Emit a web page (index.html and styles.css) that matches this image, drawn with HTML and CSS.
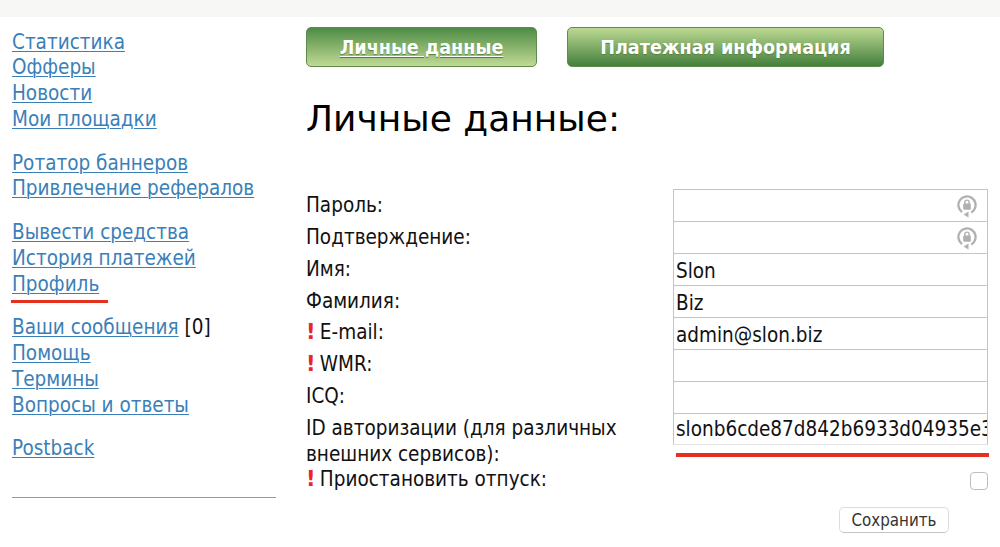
FILE: index.html
```html
<!DOCTYPE html>
<html lang="ru">
<head>
<meta charset="utf-8">
<title>Личные данные</title>
<link rel="stylesheet" href="styles.css">
</head>
<body>
<div class="topstrip"></div>
<div class="page">
  <nav class="sidebar">
    <ul class="menu">
      <li><a href="#">Статистика</a></li>
      <li><a href="#">Офферы</a></li>
      <li><a href="#">Новости</a></li>
      <li><a href="#">Мои площадки</a></li>
    </ul>
    <ul class="menu">
      <li><a href="#">Ротатор баннеров</a></li>
      <li><a href="#">Привлечение рефералов</a></li>
    </ul>
    <ul class="menu">
      <li><a href="#">Вывести средства</a></li>
      <li><a href="#">История платежей</a></li>
      <li class="marked"><a href="#">Профиль</a></li>
    </ul>
    <ul class="menu">
      <li><a href="#">Ваши сообщения</a> [0]</li>
      <li><a href="#">Помощь</a></li>
      <li><a href="#">Термины</a></li>
      <li><a href="#">Вопросы и ответы</a></li>
    </ul>
    <ul class="menu">
      <li><a href="#">Postback</a></li>
    </ul>
    <hr class="rule">
  </nav>
  <main class="content">
    <div class="tabs">
      <a href="#" class="tab tab-active">Личные данные</a>
      <a href="#" class="tab tab-other">Платежная информация</a>
    </div>
    <h1 class="title">Личные данные:</h1>
    <form class="form">
      <label class="lbl">Пароль:</label>
      <div class="field"><span class="val"></span>
        <svg class="key" viewBox="0 0 20 23"><circle cx="10" cy="10" r="8.6" fill="none" stroke="#b0b0b0" stroke-width="2.3" stroke-dasharray="44 10" transform="rotate(125 10 10)"/><path d="M11.5 16.4L6.5 19.6l5 3z" fill="#b0b0b0"/><rect x="6.2" y="8.4" width="7.6" height="6.4" rx="1" fill="#b0b0b0"/><path d="M7.9 9V7.2a2.1 2.1 0 0 1 4.2 0V9" fill="none" stroke="#b0b0b0" stroke-width="1.4"/></svg>
      </div>
      <label class="lbl">Подтверждение:</label>
      <div class="field"><span class="val"></span>
        <svg class="key" viewBox="0 0 20 23"><circle cx="10" cy="10" r="8.6" fill="none" stroke="#b0b0b0" stroke-width="2.3" stroke-dasharray="44 10" transform="rotate(125 10 10)"/><path d="M11.5 16.4L6.5 19.6l5 3z" fill="#b0b0b0"/><rect x="6.2" y="8.4" width="7.6" height="6.4" rx="1" fill="#b0b0b0"/><path d="M7.9 9V7.2a2.1 2.1 0 0 1 4.2 0V9" fill="none" stroke="#b0b0b0" stroke-width="1.4"/></svg>
      </div>
      <label class="lbl">Имя:</label>
      <div class="field"><span class="val">Slon</span></div>
      <label class="lbl">Фамилия:</label>
      <div class="field"><span class="val">Biz</span></div>
      <label class="lbl lbl-low"><b class="req">!</b> E-mail:</label>
      <div class="field"><span class="val">admin@slon.biz</span></div>
      <label class="lbl lbl-low"><b class="req">!</b> WMR:</label>
      <div class="field"><span class="val"></span></div>
      <label class="lbl lbl-low">ICQ:</label>
      <div class="field"><span class="val"></span></div>
      <label class="lbl lbl-wide">ID авторизации (для различных внешних сервисов):</label>
      <div class="field field-last"><span class="val">slonb6cde87d842b6933d04935e3</span><i class="mark-id"></i></div>
      <label class="lbl lbl-check"><b class="req">!</b> Приостановить отпуск:</label>
      <div class="checkcell"><span class="check"></span></div>
      <div class="actions"><button type="button" class="save">Сохранить</button></div>
    </form>
  </main>
</div>
</body>
</html>
```
FILE: styles.css
```css
* { box-sizing: border-box; }
html, body { margin: 0; height: 547px; overflow: hidden; background: #fff; }
body { font-family: "DejaVu Sans", Verdana, sans-serif; font-stretch: condensed; color: #111; font-size: 20.5px; }
.topstrip { height: 17px; background: #f7f7f6; }
.page { display: flex; }
.sidebar { width: 306px; padding: 12.5px 0 0 12px; flex: none; }
.menu { list-style: none; margin: 0 0 18px; padding: 0; }
.menu li { height: 25.75px; line-height: 25.75px; white-space: nowrap; position: relative; }
.menu a { color: #3b7fb8; text-decoration: underline; text-decoration-thickness: 1px; text-underline-offset: 2px; }
.marked::after { content: ""; position: absolute; left: -1px; top: 28px; width: 97px; height: 3px; background: #e5301f; }
.rule { width: 264px; margin: 34.5px 0 0; border: 0; border-top: 1px solid #999; }
.content { flex: 1; min-width: 0; }
.tabs { display: flex; gap: 30px; padding-top: 10px; }
.tab { height: 40px; line-height: 39.5px; border-radius: 5px; border: 1px solid #5f8a4e; text-align: center; color: #fff; font-weight: bold; font-size: 19.6px; text-shadow: 0 1px 1px #54803f; }
.tab-active { width: 231px; background: linear-gradient(#4e8b45, #c0da94); text-decoration: underline; text-underline-offset: 2px; }
.tab-other { width: 317px; background: linear-gradient(#bcd992, #447f3d); text-decoration: none; }
.title { margin: 31px 0 0; height: 42px; line-height: 42px; font-size: 36px; font-weight: normal; color: #000; font-stretch: normal; }
.form { display: grid; grid-template-columns: 367px 315px; grid-auto-rows: 32px; margin-top: 49px; }
.lbl { line-height: 32px; white-space: nowrap; }
.lbl-low { line-height: 30px; }
.lbl-wide { white-space: normal; line-height: 26px; padding-top: 2px; width: 330px; height: 58px; }
.lbl-check { line-height: 26px; margin-top: 21px; }
.req { display: inline-block; width: 8px; color: #e8242c; font-weight: 900; font-size: 21px; font-stretch: normal; }
.field { position: relative; border: 1px solid #c4c4c4; border-bottom: 0; display: flex; align-items: center; padding: 2px 0 0 2px; }
.field-last { border-bottom: 1px solid #e4e4e4; padding-top: 0; }
.val { white-space: nowrap; overflow: hidden; flex: 1; min-width: 0; color: #111; }
.key { position: absolute; right: 10px; top: 4.5px; width: 20px; height: 23px; }
.mark-id { position: absolute; left: 2px; top: 39px; width: 313px; height: 4px; background: #e5301f; }
.checkcell { display: flex; justify-content: flex-end; align-items: flex-start; padding-top: 27px; }
.check { width: 18px; height: 18px; border: 1px solid #bdbdbd; border-radius: 4px; background: #fff; }
.actions { grid-column: 1 / -1; padding: 30px 0 0 533px; }
.save { width: 110px; height: 26px; padding: 0; border: 1px solid #dcdcdc; border-bottom-color: #c4c4c4; border-radius: 5px; background: #fff; color: #333; font: 16.8px "DejaVu Sans", sans-serif; font-stretch: condensed; }
```
